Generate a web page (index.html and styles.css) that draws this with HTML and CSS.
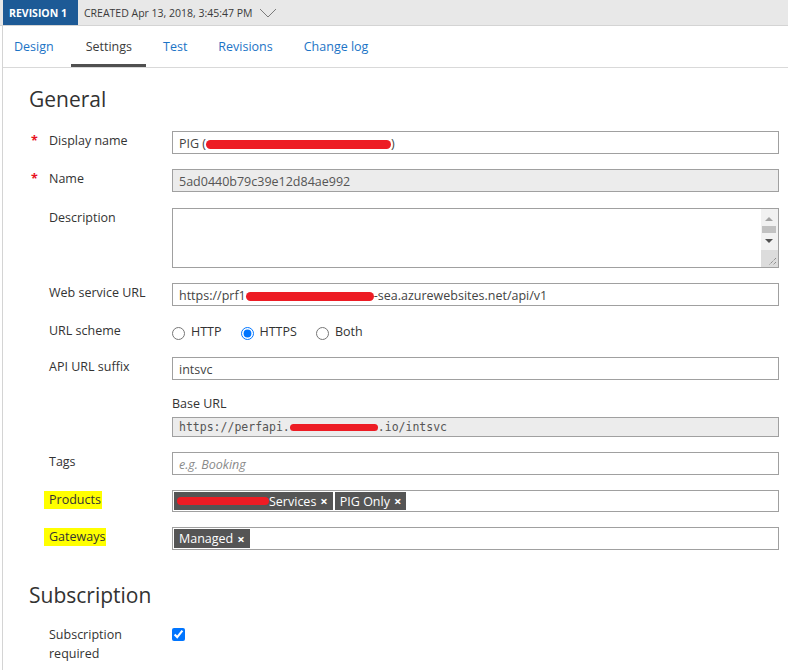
FILE: index.html
```html
<!DOCTYPE html>
<html lang="en">
<head>
<meta charset="utf-8">
<title>API settings</title>
<link rel="stylesheet" href="styles.css">
</head>
<body>
<header class="revbar">
  <span class="rev-badge">REVISION 1</span>
  <span class="created">CREATED Apr 13, 2018, 3:45:47 PM</span>
  <svg class="chev" width="18" height="10" viewBox="0 0 18 10"><path d="M1 1 L9 9 L17 1" fill="none" stroke="#7a7a7a" stroke-width="1"/></svg>
</header>

<div class="app">
  <nav class="tabs">
    <a class="tab">Design</a>
    <a class="tab active">Settings</a>
    <a class="tab">Test</a>
    <a class="tab">Revisions</a>
    <a class="tab">Change log</a>
  </nav>

  <main class="content">
    <h2 class="section-title">General</h2>

    <div class="form-row">
      <span class="req">*</span>
      <label class="lbl">Display name</label>
      <div class="input">PIG (<span class="redact redact-name"></span>)</div>
    </div>

    <div class="form-row tall-gap">
      <span class="req">*</span>
      <label class="lbl">Name</label>
      <div class="input disabled">5ad0440b79c39e12d84ae992</div>
    </div>

    <div class="form-row">
      <span class="req"></span>
      <label class="lbl">Description</label>
      <div class="input textarea">
        <div class="ta-scroll">
          <span class="arrow-up"></span>
          <span class="thumb"></span>
          <span class="arrow-down"></span>
          <span class="grip">
            <svg width="17" height="17" viewBox="0 0 17 17"><path d="M15 8 L8 15 M15 12 L12 15" stroke="#6d6d6d" stroke-width="1" stroke-dasharray="1 1"/></svg>
          </span>
        </div>
      </div>
    </div>

    <div class="form-row">
      <span class="req"></span>
      <label class="lbl">Web service URL</label>
      <div class="input">https://prf1<span class="redact redact-url"></span>-sea.azurewebsites.net/api/v1</div>
    </div>

    <div class="form-row">
      <span class="req"></span>
      <label class="lbl">URL scheme</label>
      <div class="radios">
        <label class="opt"><input type="radio" name="scheme">HTTP</label>
        <label class="opt"><input type="radio" name="scheme" checked>HTTPS</label>
        <label class="opt"><input type="radio" name="scheme">Both</label>
      </div>
    </div>

    <div class="form-row">
      <span class="req"></span>
      <label class="lbl">API URL suffix</label>
      <div class="input">intsvc</div>
    </div>

    <div class="form-row">
      <span class="req"></span>
      <span class="lbl"></span>
      <div class="stack">
        <div class="sublabel">Base URL</div>
        <div class="input disabled mono">https://perfapi.<span class="redact redact-base"></span>.io/intsvc</div>
      </div>
    </div>

    <div class="form-row">
      <span class="req"></span>
      <label class="lbl">Tags</label>
      <div class="input placeholder">e.g. Booking</div>
    </div>

    <div class="form-row">
      <span class="req"></span>
      <label class="lbl"><span class="hl">Products</span></label>
      <div class="tagbox">
        <span class="chip"><span class="redact redact-chip"></span>Services <b class="x">×</b></span>
        <span class="chip">PIG Only <b class="x">×</b></span>
      </div>
    </div>

    <div class="form-row">
      <span class="req"></span>
      <label class="lbl"><span class="hl">Gateways</span></label>
      <div class="tagbox tall">
        <span class="chip">Managed <b class="x">×</b></span>
      </div>
    </div>

    <h2 class="section-title second">Subscription</h2>

    <div class="form-row">
      <span class="req"></span>
      <label class="lbl wrap">Subscription required</label>
      <div><input class="check" type="checkbox" checked></div>
    </div>
  </main>
</div>
</body>
</html>
```

FILE: styles.css
```css
* { box-sizing: border-box; }

body {
  margin: 0;
  font-family: "Open Sans", "Segoe UI", sans-serif;
  font-size: 12.5px;
  color: #333;
  background: #fff;
}

/* revision strip */
.revbar {
  display: flex;
  align-items: center;
  height: 26px;
  padding-left: 3px;
  background: #e8e8e8;
  border-bottom: 1px solid #d4d4d4;
}
.rev-badge {
  display: flex;
  align-items: center;
  align-self: flex-start;
  height: 25px;
  width: 75px;
  padding-left: 6px;
  background: #1d5a96;
  color: #fff;
  font-weight: 700;
  font-size: 10.5px;
}
.created {
  margin-left: 6px;
  font-size: 10.5px;
  color: #3a3a3a;
}
.chev { margin-left: 6px; margin-top: 1px; }

/* page body with its left rule */
.app {
  margin-left: 2px;
  border-left: 1px solid #d4d4d4;
}

.tabs {
  display: flex;
  gap: 2px;
  height: 42px;
  border-bottom: 1px solid #d9d9d9;
}
.tab {
  display: flex;
  align-items: center;
  padding: 3px 14px 0 15px;
  border-bottom: 3px solid transparent;
  color: #1c74c6;
  font-size: 12.5px;
  cursor: pointer;
}
.tab:first-child { padding-left: 11px; padding-right: 15px; }
.tab.active {
  color: #3c3c3c;
  border-bottom-color: #505050;
}

.content {
  padding: 16px 0 40px 26px;
}

.section-title {
  margin: 0 0 17px;
  font-size: 21px;
  line-height: 30px;
  font-weight: 400;
  color: #323232;
}
.section-title.second { margin-top: 30px; margin-bottom: 15px; }

.form-row {
  display: grid;
  grid-template-columns: 20px 123px 607px;
  margin-bottom: 15px;
}
.form-row.tall-gap { margin-bottom: 16px; }
.req {
  padding-left: 2px;
  padding-top: 1px;
  color: #e81123;
  font-weight: 700;
  line-height: 18px;
}
.lbl {
  padding-top: 1px;
  line-height: 18px;
  color: #333;
}
.lbl.wrap { line-height: 19px; padding-top: 0; }

.hl {
  display: inline-block;
  margin-left: -5px;
  padding: 0 1px 0 5px;
  background: #ffff00;
}

.input {
  height: 23px;
  padding: 3px 6px 0;
  line-height: 18px;
  border: 1px solid #a0a0a0;
  background: #fff;
  color: #444;
  white-space: nowrap;
  overflow: hidden;
}
.input.disabled { background: #ececec; color: #555; }
.input.mono {
  height: 20px;
  padding: 0 6px;
  font-family: "DejaVu Sans Mono", "Liberation Mono", monospace;
  font-size: 11.5px;
}
.input.placeholder { color: #8a8a8a; font-style: italic; }

.textarea {
  position: relative;
  height: 60px;
}
.ta-scroll {
  position: absolute;
  top: 0;
  right: 0;
  bottom: 0;
  width: 17px;
  background: #f1f1f1;
}
.arrow-up, .arrow-down, .thumb, .grip { position: absolute; left: 0; }
.arrow-up {
  top: 8px;
  left: 4px;
  border-left: 4px solid transparent;
  border-right: 4px solid transparent;
  border-bottom: 4px solid #a3a3a3;
}
.thumb {
  top: 17px;
  left: 1px;
  width: 14px;
  height: 7px;
  background: #c1c1c1;
}
.arrow-down {
  top: 30px;
  left: 4px;
  border-left: 4px solid transparent;
  border-right: 4px solid transparent;
  border-top: 4px solid #505050;
}
.grip {
  bottom: 0;
  width: 17px;
  height: 17px;
  background: #dcdcdc;
}
.grip svg { display: block; }

.redact {
  display: inline-block;
  height: 9px;
  border-radius: 5px;
  background: #ed1c24;
  vertical-align: -1px;
}
.redact-name { width: 185px; }
.redact-url { width: 128px; }
.redact-base { width: 88px; height: 7px; vertical-align: 0; }
.redact-chip { width: 92px; height: 8px; margin-left: -2px; }

.radios {
  display: flex;
  gap: 19px;
  height: 21px;
  padding-top: 2px;
}
.opt {
  display: flex;
  align-items: center;
  gap: 6px;
  height: 18px;
  line-height: 18px;
  color: #333;
}
.opt input { margin: 2px 0 0; width: 13px; height: 13px; }

.sublabel {
  line-height: 18px;
  margin-bottom: 4px;
  color: #333;
}

.tagbox {
  display: flex;
  gap: 2px;
  height: 22px;
  padding: 1px;
  border: 1px solid #a0a0a0;
}
.tagbox.tall { height: 23px; }
.chip {
  display: flex;
  align-items: center;
  height: 18px;
  padding: 0 5px;
  background: #555;
  color: #fff;
  font-size: 12.5px;
  white-space: nowrap;
}
.tagbox.tall .chip { height: 19px; }
.chip .x { margin-left: 4px; font-size: 13px; font-weight: 700; }

.check {
  margin: 3px 0 0;
  width: 13px;
  height: 13px;
}
```
